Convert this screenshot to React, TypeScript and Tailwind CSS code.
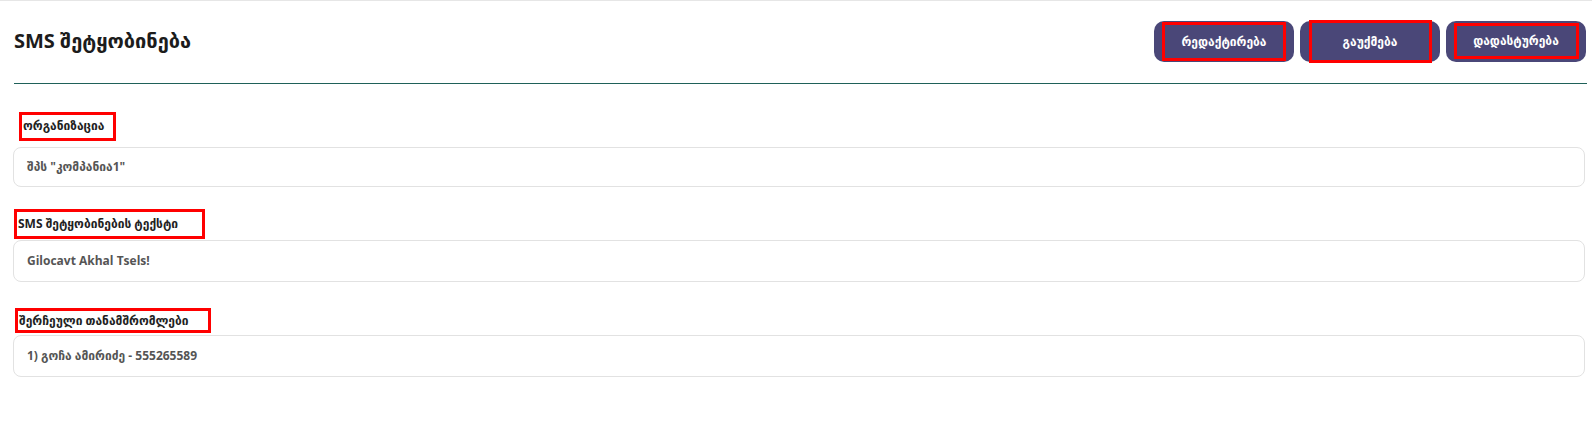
const font = { fontFamily: '"Open Sans", "DejaVu Sans", sans-serif' };

const fields = [
  { label: "ორგანიზაცია", value: 'შპს "კომპანია1"', box: "ml-[6px] w-[97px] h-[29px] items-end pb-[3px] mt-[28px]", input: "mt-[6px] h-[40px]" },
  { label: "SMS შეტყობინების ტექსტი", value: "Gilocavt Akhal Tsels!", box: "ml-[1px] w-[191px] h-[30px] items-center mt-[22px]", input: "mt-px h-[42px]" },
  { label: "შერჩეული თანამშრომლები", value: "1) გოჩა ამირიძე - 555265589", box: "ml-[2px] w-[196px] h-[25px] items-center mt-[26px]", input: "mt-[2px] h-[42px]" },
];

const buttons = [
  { text: "რედაქტირება", mark: "w-[124px] h-[39px] mt-[1px]" },
  { text: "გაუქმება", mark: "w-[123px] h-[43px] -mt-[1px]" },
  { text: "დადასტურება", mark: "w-[125px] h-[36px] mt-[2px]" },
];

export default function App() {
  return (
    <div className="min-h-screen bg-white border-t border-[#e6e6e6]" style={font}>
      <div className="pl-[14px] pr-[5px]">
        <div className="flex items-start justify-between pt-[20px] h-[82px]">
          <h1 className="text-[20px] font-bold text-[#1c1c1c] mt-[6px] leading-[28px]">SMS შეტყობინება</h1>
          <div className="flex gap-[6px] mr-[1px]">
            {buttons.map((b) => (
              <button key={b.text} className="w-[140px] h-[41px] rounded-[10px] bg-[#4a4778] flex justify-center items-start">
                <span className={`border-[3px] border-[#ff0000] flex items-center justify-center text-white text-[12px] font-bold ${b.mark}`}>{b.text}</span>
              </button>
            ))}
          </div>
        </div>
        <div className="h-px bg-[#1f6159]" />
      </div>

      <div className="pl-[13px] pr-[7px]">
        {fields.map((f) => (
          <div key={f.label}>
            <div className={`border-[3px] border-[#ff0000] flex pl-px text-[12px] font-bold text-[#222] ${f.box}`}>{f.label}</div>
            <div className={`rounded-[8px] border border-[#e2e2e2] flex items-center pl-[13px] text-[12px] font-bold text-[#555] ${f.input}`}>{f.value}</div>
          </div>
        ))}
      </div>
    </div>
  );
}
